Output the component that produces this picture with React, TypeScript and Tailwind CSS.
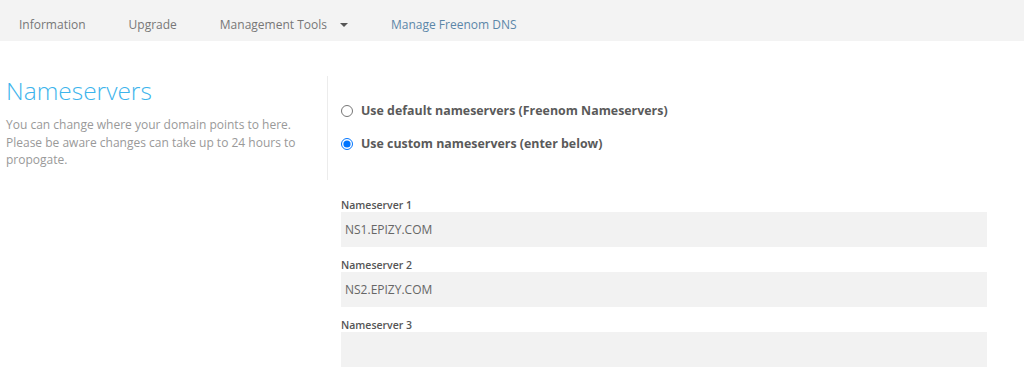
export default function App() {
  const servers = [
    { label: "Nameserver 1", value: "NS1.EPIZY.COM" },
    { label: "Nameserver 2", value: "NS2.EPIZY.COM" },
    { label: "Nameserver 3", value: "" },
  ];

  return (
    <div className="min-h-screen w-full bg-white font-['Open_Sans',sans-serif]">
      <nav className="h-[41px] bg-[#f3f3f3] flex items-center pt-[8px] pl-[19px] gap-[43px] text-[12px] text-[#777]">
        <span>Information</span>
        <span>Upgrade</span>
        <span className="flex items-center">
          Management Tools
          <span className="ml-[13px] w-0 h-0 border-l-[4px] border-r-[4px] border-t-[4px] border-l-transparent border-r-transparent border-t-[#555]" />
        </span>
        <span className="text-[#5b86a8]">Manage Freenom DNS</span>
      </nav>

      <div className="flex pt-[35px]">
        <div className="w-[328px] shrink-0 border-r border-[#ececec] pl-[6px] h-[104px]">
          <h1 className="text-[24.5px] font-light leading-[30px] text-[#3db4ec]">Nameservers</h1>
          <p className="mt-[10px] text-[12px] leading-[17.5px] text-[#999] w-[300px]">
            You can change where your domain points to here. Please be aware changes can take up to 24 hours to propogate.
          </p>
        </div>
        <div className="pl-[13px] pt-[26px] flex flex-col gap-[16px]">
          <label className="flex items-center gap-[8px] text-[12.4px] leading-[17px] font-bold text-[#5a5a5a]">
            <input type="radio" name="ns" className="m-0 w-[12px] h-[12px]" />
            Use default nameservers (Freenom Nameservers)
          </label>
          <label className="flex items-center gap-[8px] text-[12.4px] leading-[17px] font-bold text-[#5a5a5a]">
            <input type="radio" name="ns" defaultChecked className="m-0 w-[12px] h-[12px]" />
            Use custom nameservers (enter below)
          </label>
        </div>
      </div>

      <div className="ml-[341px] mr-[37px] mt-[7px] flex flex-col">
        {servers.map((s) => (
          <div key={s.label} className="flex flex-col">
            <div className="h-[25px] flex items-end text-[10.5px] leading-[14px] font-semibold text-[#555]">{s.label}</div>
            <div className="h-[35px] bg-[#f2f2f2] flex items-center px-[4px] text-[12px] text-[#666]">{s.value}</div>
          </div>
        ))}
      </div>
    </div>
  );
}
